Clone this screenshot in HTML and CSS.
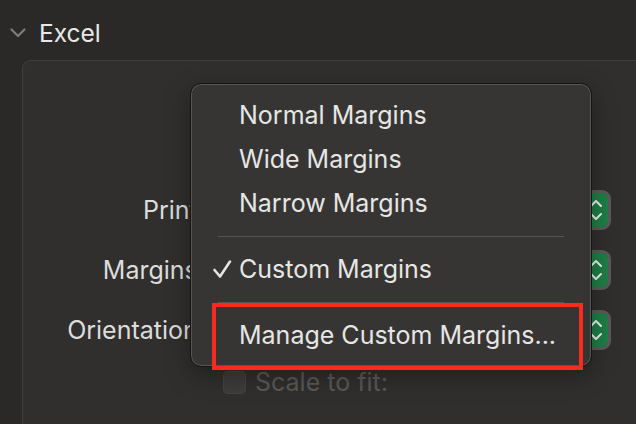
FILE: index.html
```html
<!DOCTYPE html>
<html lang="en">
<head>
<meta charset="utf-8">
<title>Excel – Margins</title>
<link rel="stylesheet" href="styles.css">
</head>
<body>
<div class="window">
  <div class="section-header">
    <svg class="disclosure" width="16" height="10" viewBox="0 0 16 10"><path d="M1.5 1.5 L8 8 L14.5 1.5" fill="none" stroke="#7d7c7a" stroke-width="2.2" stroke-linecap="round" stroke-linejoin="round"/></svg>
    <span class="section-title">Excel</span>
  </div>
  <div class="panel">
    <div class="form">
      <div class="label">Print:</div>
      <div class="popup"><span class="stepper"><svg width="24" height="34" viewBox="0 0 24 34"><path d="M7 13 L12 8 L17 13 M7 21 L12 26 L17 21" fill="none" stroke="#e8f2ec" stroke-width="2" stroke-linecap="round" stroke-linejoin="round"/></svg></span></div>
      <div class="label">Margins:</div>
      <div class="popup"><span class="stepper"><svg width="24" height="34" viewBox="0 0 24 34"><path d="M7 13 L12 8 L17 13 M7 21 L12 26 L17 21" fill="none" stroke="#e8f2ec" stroke-width="2" stroke-linecap="round" stroke-linejoin="round"/></svg></span></div>
      <div class="label">Orientation:</div>
      <div class="popup"><span class="stepper"><svg width="24" height="34" viewBox="0 0 24 34"><path d="M7 13 L12 8 L17 13 M7 21 L12 26 L17 21" fill="none" stroke="#e8f2ec" stroke-width="2" stroke-linecap="round" stroke-linejoin="round"/></svg></span></div>
      <div></div>
      <div class="check-row"><span class="checkbox"></span><span class="check-label">Scale to fit:</span></div>
    </div>

    <div class="menu">
      <div class="item">Normal Margins</div>
      <div class="item">Wide Margins</div>
      <div class="item">Narrow Margins</div>
      <div class="separator"></div>
      <div class="item checked"><svg class="check" width="20" height="20" viewBox="0 0 20 20"><path d="M2.5 11 L8 17.5 L18 2.5" fill="none" stroke="#e4e4e2" stroke-width="2.6" stroke-linecap="round" stroke-linejoin="round"/></svg>Custom Margins</div>
      <div class="separator"></div>
      <div class="item">Manage Custom Margins...</div>
      <div class="highlight"></div>
    </div>
  </div>
</div>
</body>
</html>
```

FILE: styles.css
```css
html, body {
  margin: 0;
  padding: 0;
  background: #2a2928;
  width: 636px;
  height: 424px;
  overflow: hidden;
}

.window {
  font-family: "Inter", "Noto Sans", sans-serif;
  color: #e4e4e2;
  height: 424px;
  overflow: hidden;
}

.section-header {
  display: flex;
  align-items: center;
  height: 32px;
  padding: 17px 0 0 10px;
  gap: 13px;
}

.section-title {
  font-size: 24.5px;
  color: #e8e8e6;
}

.panel {
  position: relative;
  margin: 11px 0 0 22px;
  height: 420px;
  background: #302f2d;
  border: 1px solid #403f3d;
  border-right: none;
  border-radius: 9px 0 0 0;
}

.form {
  display: grid;
  grid-template-columns: 182px 400px;
  column-gap: 6px;
  row-gap: 20px;
  padding-top: 129px;
  align-items: center;
}

.label {
  text-align: right;
  font-size: 25px;
  color: #dddddb;
  height: 40px;
  line-height: 40px;
}

.popup {
  height: 34px;
  border: 3px solid #5c5b59;
  border-radius: 9px;
  background: #464543;
  display: flex;
  justify-content: flex-end;
  padding: 0;
}

.stepper {
  width: 24px;
  height: 34px;
  background: #1e7f47;
  border-radius: 6px;
  display: flex;
}

.check-row {
  display: flex;
  align-items: center;
  gap: 9px;
  padding-left: 12px;
  height: 24px;
}

.checkbox {
  width: 23px;
  height: 23px;
  border-radius: 5px;
  background: #3d3c3b;
  box-shadow: inset 0 0 0 1px #454443;
}

.check-label {
  font-size: 25px;
  color: #5a5957;
}

.menu {
  position: absolute;
  left: 167px;
  top: 22px;
  width: 400px;
  padding: 9px 0;
  background: #363533;
  border: 1px solid #141414;
  border-radius: 11px;
  box-shadow: inset 0 0 0 1px #575654, 0 8px 24px rgba(0, 0, 0, 0.35);
}

.item {
  position: relative;
  height: 44px;
  line-height: 44px;
  padding-left: 48px;
  font-size: 25px;
  color: #e6e6e4;
}

.check {
  position: absolute;
  left: 21px;
  top: 12px;
}

.separator {
  height: 1px;
  margin: 11px 27px 10px 27px;
  background: #565553;
}

.highlight {
  position: absolute;
  left: 21px;
  top: 219px;
  width: 363px;
  height: 59px;
  border: 4px solid #fb2a1d;
}
```
